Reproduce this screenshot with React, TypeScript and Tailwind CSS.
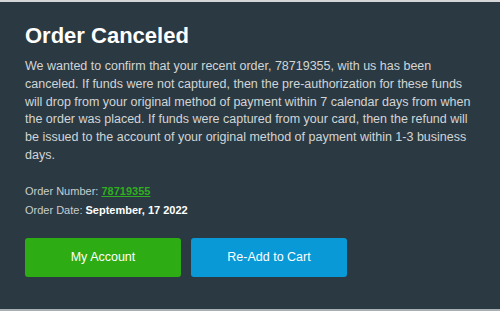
export default function App() {
  return (
    <div className="w-[500px] h-[311px] bg-[#2b3a42] border-t-2 border-b-2 border-t-[#d4d6d7] border-b-[#a9b0b3] font-['Liberation_Sans',Arial,sans-serif]">
      <div className="px-[25px] pt-[21px]">
        <h1 className="text-[22px] font-bold text-white leading-[26px]">Order Canceled</h1>

        <p className="mt-[9px] w-[455px] text-[12.5px] leading-[17.8px] text-[#d2d5d6]">
          We wanted to confirm that your recent order, 78719355, with us has been canceled. If funds
          were not captured, then the pre-authorization for these funds will drop from your original
          method of payment within 7 calendar days from when the order was placed. If funds were
          captured from your card, then the refund will be issued to the account of your original
          method of payment within 1-3 business days.
        </p>

        {/* Order details */}
        <div className="mt-[17px] text-[11px] leading-[19px] text-[#c9cdcf]">
          <div>
            Order Number:{" "}
            <a href="#" className="font-bold text-[#2fae1f] underline">
              78719355
            </a>
          </div>
          <div>
            Order Date: <span className="font-bold text-white">September, 17 2022</span>
          </div>
        </div>

        <div className="mt-[18px] flex gap-[10px]">
          <button className="w-[156px] h-[39px] rounded-[3px] bg-[#2eac14] text-white text-[12.5px]">
            My Account
          </button>
          <button className="w-[156px] h-[39px] rounded-[3px] bg-[#0899d6] text-white text-[12.5px]">
            Re-Add to Cart
          </button>
        </div>
      </div>
    </div>
  );
}
